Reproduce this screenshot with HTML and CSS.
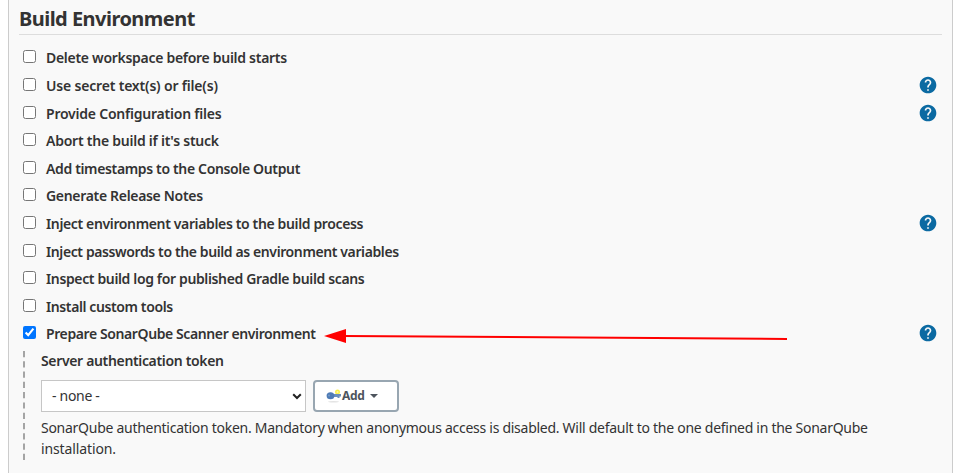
FILE: index.html
```html
<!DOCTYPE html>
<html lang="en">
<head>
<meta charset="utf-8">
<title>Build Environment</title>
<link rel="stylesheet" href="styles.css">
</head>
<body>
<svg width="0" height="0" class="defs"><defs>
<symbol id="help" viewBox="0 0 24 24"><path fill="#0b6aa2" d="M12 2C6.48 2 2 6.48 2 12s4.480 10 10 10 10-4.480 10-10S17.520 2 12 2zm1 17h-2v-2h2v2zm2.070-7.750l-.9.920C13.450 12.900 13 13.500 13 15h-2v-.5c0-1.100.450-2.100 1.170-2.830l1.240-1.260c.370-.360.590-.860.590-1.410 0-1.100-.9-2-2-2s-2 .9-2 2H8c0-2.210 1.790-4 4-4s4 1.790 4 4c0 .880-.360 1.680-.930 2.250z"/></symbol>
</defs></svg>
<main class="panel">
<h1>Build Environment</h1>
<div class="options">
<div class="row"><label><input type="checkbox"><span class="t1">Delete workspace before build starts</span></label></div>
<div class="row"><label><input type="checkbox"><span class="t2">Use secret text(s) or file(s)</span></label><svg class="help"><use href="#help"/></svg></div>
<div class="row"><label><input type="checkbox"><span class="t3">Provide Configuration files</span></label><svg class="help"><use href="#help"/></svg></div>
<div class="row"><label><input type="checkbox"><span class="t4">Abort the build if it's stuck</span></label></div>
<div class="row"><label><input type="checkbox"><span class="t5">Add timestamps to the Console Output</span></label></div>
<div class="row"><label><input type="checkbox"><span class="t6">Generate Release Notes</span></label></div>
<div class="row"><label><input type="checkbox"><span class="t7">Inject environment variables to the build process</span></label><svg class="help"><use href="#help"/></svg></div>
<div class="row"><label><input type="checkbox"><span class="t8">Inject passwords to the build as environment variables</span></label></div>
<div class="row"><label><input type="checkbox"><span class="t9">Inspect build log for published Gradle build scans</span></label></div>
<div class="row"><label><input type="checkbox"><span class="t10">Install custom tools</span></label></div>
<div class="row"><label><input type="checkbox" checked><span class="t11">Prepare SonarQube Scanner environment</span></label><svg class="help last"><use href="#help"/></svg></div>
</div>
<section class="nested">
<svg class="guide" width="2" height="109"><path d="M1 0V109" stroke="#a5a5a5" stroke-width="2" stroke-dasharray="6.200 4.080"/></svg>
<div class="fields">
<div class="name">Server authentication token</div>
<div class="controls">
<div class="select"><span>- none -</span><svg width="10" height="7" viewBox="0 0 10 7"><path d="M1.200 1.200L5 5L8.800 1.200" fill="none" stroke="#222" stroke-width="2"/></svg></div>
<button type="button"><svg class="key" width="15" height="14" viewBox="0 0 15 14"><ellipse cx="7.500" cy="12.700" rx="5.500" ry=".7" fill="#e3e3e3"/><circle cx="11.500" cy="3" r="2.500" fill="#f8f04c"/><circle cx="11.500" cy="3" r="1" fill="#fff9a5"/><path d="M6 5h9v2.500h-1.500v1.500h-2v-1H6z" fill="#6a8fbd"/><ellipse cx="4.500" cy="6.800" rx="3.900" ry="3.500" fill="#4e7bb5"/><circle cx="3" cy="6.500" r="1" fill="#7599c6"/></svg><span>Add</span><i class="caret"></i></button>
</div>
<p><span class="p1">SonarQube authentication token. Mandatory when anonymous access is disabled. Will default to the one defined in the SonarQube</span><br><span class="p2">installation.</span></p>
</div>
</section>
<svg class="arrow" width="464" height="16" viewBox="0 0 464 16"><path d="M20 7L463 10" stroke="red" stroke-width="2"/><path d="M0 7L22 0V14z" fill="red"/></svg>
</main>
</body>
</html>
```
FILE: styles.css
```css
* { box-sizing: border-box; }
body { margin: 0; background: #fff; color: #333; font: 14px/21px "Noto Sans", "Open Sans", sans-serif; overflow: hidden; }
.defs { position: absolute; }
.panel { position: relative; height: 473px; margin: 0 7px 0 8px; padding: 0 10px; background: #f9f9f9; border: solid #ccc; border-width: 0 1px; }
h1 { margin: 0; height: 35px; padding-top: 5px; border-bottom: 1px solid #ddd; font-size: 20px; line-height: 27px; font-weight: 700; letter-spacing: -.53px; white-space: nowrap; }
.options { padding-top: 9.100px; }
.row { display: flex; align-items: center; justify-content: space-between; height: 27.600px; padding: 0 4px; }
label { display: flex; align-items: center; font-weight: 600; white-space: nowrap; }
input { width: 13px; height: 13px; margin: 0 10px 2px 0; }
.t1 { letter-spacing: -.29px; }
.t2 { letter-spacing: -.18px; }
.t3 { letter-spacing: -.22px; }
.t4 { letter-spacing: -.24px; }
.t5 { letter-spacing: -.35px; }
.t6 { letter-spacing: -.32px; }
.t7 { letter-spacing: -.36px; }
.t8 { letter-spacing: -.39px; }
.t9 { letter-spacing: -.36px; }
.t10 { letter-spacing: -.39px; }
.t11 { letter-spacing: -.4px; }
.help { width: 20px; height: 20px; }
.last { margin-bottom: 1px; }
.nested { display: flex; margin: 3.400px 0 0 4px; }
.guide { flex: none; }
.fields { margin-left: 16px; flex: 1; }
.name { height: 29px; font-weight: 600; line-height: 20px; letter-spacing: -.34px; }
.controls { display: flex; gap: 7px; }
.select { display: flex; align-items: center; justify-content: space-between; width: 265px; height: 32px; padding: 0 3px 2px 10px; background: #fff; border: 1px solid #c6c6c6; letter-spacing: -.3px; }
.select svg { margin-top: 2px; }
button { display: flex; align-items: center; width: 86px; height: 32px; padding: 0 0 0 11px; border: 2px solid #98a6b1; border-radius: 4px; background: #fff; color: #4d545d; font: 700 12px/18px "Noto Sans", sans-serif; letter-spacing: -.3px; }
.key { margin-right: 1px; }
.caret { margin-left: 5px; border: 4px solid transparent; border-top-color: #4d545d; border-bottom: 0; }
p { margin: 5px 0 0; white-space: nowrap; }
.p1 { letter-spacing: -.272px; }
.p2 { letter-spacing: -.12px; }
.arrow { position: absolute; left: 315px; top: 329px; }
```
